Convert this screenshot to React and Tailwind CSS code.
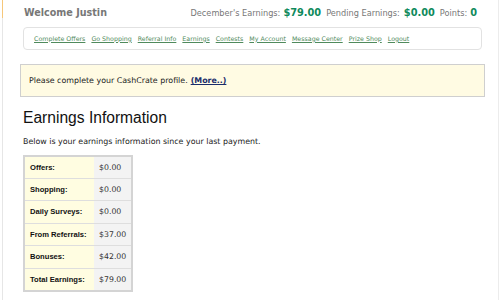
const links = ['Complete Offers', 'Go Shopping', 'Referral Info', 'Earnings', 'Contests', 'My Account', 'Message Center', 'Prize Shop', 'Logout']

const rows = [
  ['Offers:', '$0.00'],
  ['Shopping:', '$0.00'],
  ['Daily Surveys:', '$0.00'],
  ['From Referrals:', '$37.00'],
  ['Bonuses:', '$42.00'],
  ['Total Earnings:', '$79.00'],
]

export default function App() {
  return (
    <div className="w-[500px] h-[300px] overflow-hidden bg-white flex" style={{ fontFamily: '"DejaVu Sans", Verdana, sans-serif' }}>
      <div className="w-[2px] shrink-0" />
      <div className="w-px shrink-0 flex flex-col">
        <div className="h-[18px] bg-[#f6c77a]" />
        <div className="flex-1 bg-[#e6e6e6]" />
      </div>
      <div className="flex-1 pl-[20px] pr-[18px]">
        <div className="flex items-center justify-between h-[27px] pl-px pr-[3px]">
          <span className="text-[9.6px] font-bold text-[#777]">Welcome Justin</span>
          <div className="flex items-baseline text-[8.2px] text-[#777]">
            <span>December's Earnings:</span>
            <span className="ml-[3px] text-[9.8px] font-bold text-[#0f8a5c]">$79.00</span>
            <span className="ml-[5px]">Pending Earnings:</span>
            <span className="ml-[4px] text-[9.8px] font-bold text-[#0f8a5c]">$0.00</span>
            <span className="ml-[5px]">Points:</span>
            <span className="ml-[3px] text-[9.8px] font-bold text-[#0f8a5c]">0</span>
          </div>
        </div>
        <div className="h-[23px] border border-[#e2e2e2] rounded-[4px] flex items-center gap-[6px] pl-[10px] mr-[-2px]">
          {links.map(l => (
            <a key={l} className="text-[6.3px] text-[#4f8a5c] underline">{l}</a>
          ))}
        </div>
        <div className="mt-[14px] ml-[-3px] mr-[-5px] h-[33px] border border-[#cfcfcf] bg-[#fffbe3] flex items-center pl-[8px] text-[7.9px] text-[#222]">
          <span>Please complete your CashCrate profile.</span>
          <a className="ml-[3px] font-bold text-[#1a2d6b] underline">(More..)</a>
        </div>
        <h1 className="mt-[11px] text-[15.6px] leading-[20px] text-[#111]" style={{ fontFamily: '"Liberation Sans", Arial, sans-serif' }}>Earnings Information</h1>
        <p className="mt-[8px] text-[7.9px] text-[#222]">Below is your earnings information since your last payment.</p>
        <table className="mt-[7px] w-[110px] border-2 border-[#d4d4d4] border-collapse">
          <tbody>
            {rows.map(([k, v]) => (
              <tr key={k} className="h-[22.5px] border-b border-[#dedede] last:border-b-0">
                <td className="w-[70px] bg-[#fffde1] pl-[5px] text-[7.6px] font-bold text-[#111]" style={{ fontFamily: '"Liberation Sans", Arial, sans-serif' }}>{k}</td>
                <td className="bg-[#f3f3f3] pl-[5px] text-[7.8px] text-[#333]">{v}</td>
              </tr>
            ))}
          </tbody>
        </table>
      </div>
      <div className="w-px shrink-0 bg-[#ececec]" />
      <div className="w-px shrink-0" />
    </div>
  )
}
